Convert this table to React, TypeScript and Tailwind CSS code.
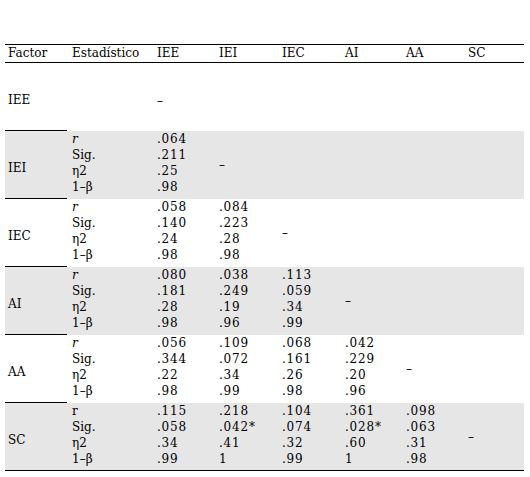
import React from "react";

type Block = {
  factor: string;
  cols: string[][];
  gray: boolean;
  uprightR?: boolean;
};

const blocks: Block[] = [
  { factor: "IEI", gray: true, cols: [[".064", ".211", ".25", ".98"]] },
  {
    factor: "IEC",
    gray: false,
    cols: [
      [".058", ".140", ".24", ".98"],
      [".084", ".223", ".28", ".98"],
    ],
  },
  {
    factor: "AI",
    gray: true,
    cols: [
      [".080", ".181", ".28", ".98"],
      [".038", ".249", ".19", ".96"],
      [".113", ".059", ".34", ".99"],
    ],
  },
  {
    factor: "AA",
    gray: false,
    cols: [
      [".056", ".344", ".22", ".98"],
      [".109", ".072", ".34", ".99"],
      [".068", ".161", ".26", ".98"],
      [".042", ".229", ".20", ".96"],
    ],
  },
  {
    factor: "SC",
    gray: true,
    uprightR: true,
    cols: [
      [".115", ".058", ".34", ".99"],
      [".218", ".042*", ".41", "1"],
      [".104", ".074", ".32", ".99"],
      [".361", ".028*", ".60", "1"],
      [".098", ".063", ".31", ".98"],
    ],
  },
];

const headers = ["Factor", "Estadístico", "IEE", "IEI", "IEC", "AI", "AA", "SC"];
const grid = "grid grid-cols-[62px_87px_62px_63px_63px_61px_62px_59px]";

function Lines({ items, wide }: { items: React.ReactNode[]; wide?: boolean }) {
  return (
    <div className={`flex flex-col pl-[3px] ${wide ? "tracking-[0.8px]" : ""}`}>
      {items.map((t, i) => (
        <div key={i} className="h-4 leading-4 whitespace-nowrap">
          {t}
        </div>
      ))}
    </div>
  );
}

export default function App() {
  return (
    <div className="min-h-[477px] w-[530px] bg-white pt-[44px] pl-[5px] font-['DejaVu_Serif',serif] text-[12px] text-black">
      <div className="w-[519px]">
        {/* header */}
        <div className={`${grid} h-[19px] border-y border-black`}>
          {headers.map((h, i) => (
            <div
              key={h}
              className={`${i === 1 ? "pl-[5px]" : "pl-[3px]"} leading-[17px]`}
            >
              {h}
            </div>
          ))}
        </div>

        {/* IEE row */}
        <div className={`${grid} h-[68px]`}>
          <div className="flex items-center border-b border-black pt-[7px] pl-[3px]">
            IEE
          </div>
          <div />
          <div className="flex items-center pt-[7px] pl-[3px]">–</div>
        </div>

        {blocks.map((b, bi) => {
          const last = bi === blocks.length - 1;
          const dashCol = b.cols.length;
          return (
            <div
              key={b.factor}
              className={`${grid} h-[68px] ${b.gray ? "bg-[#e6e6e6]" : ""} ${
                last ? "border-b border-black" : ""
              }`}
            >
              <div
                className={`flex items-center pt-[7px] pl-[3px] ${
                  last ? "" : "border-b border-black"
                }`}
              >
                {b.factor}
              </div>
              <div className="pl-[2px]">
                <Lines
                  items={[
                    b.uprightR ? "r" : <i key="r">r</i>,
                    "Sig.",
                    "η2",
                    "1–β",
                  ]}
                />
              </div>
              {[0, 1, 2, 3, 4, 5].map((ci) => {
                if (ci < b.cols.length) {
                  return <Lines key={ci} items={b.cols[ci]} wide />;
                }
                if (ci === dashCol) {
                  return (
                    <div key={ci} className="flex items-center pl-[3px]">
                      –
                    </div>
                  );
                }
                return <div key={ci} />;
              })}
            </div>
          );
        })}
      </div>
    </div>
  );
}
